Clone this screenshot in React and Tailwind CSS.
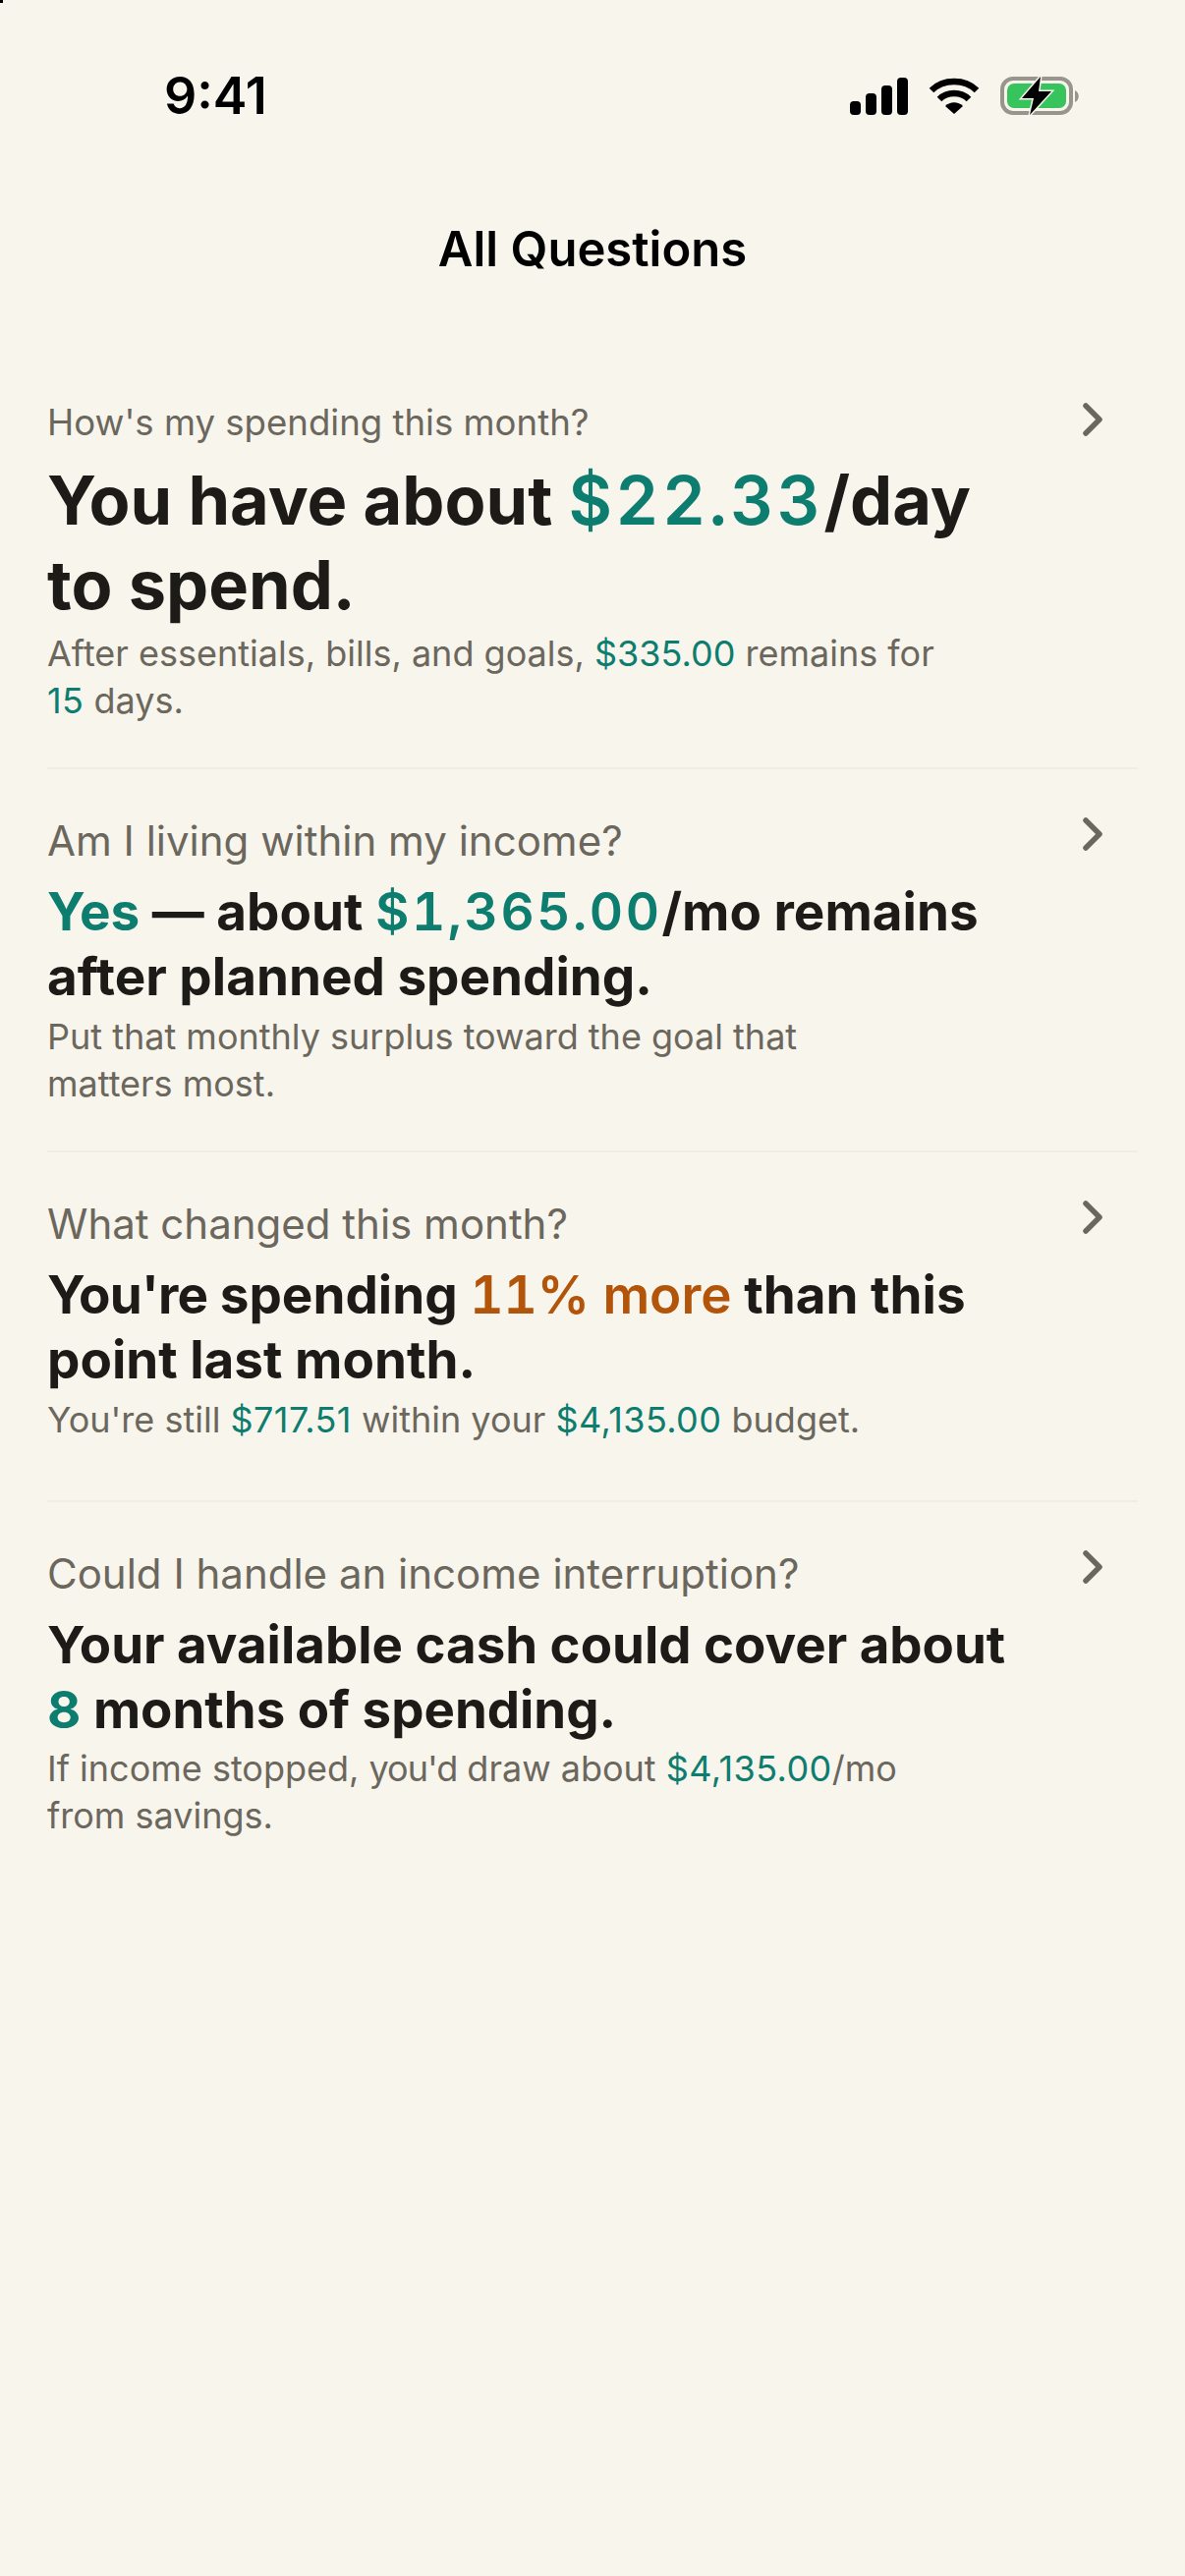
import React from 'react';

const G = ({ children, className = 'tracking-[0.012em]' }) => <span className={`text-[#0c7d6e] ${className}`}>{children}</span>;
// figures in the headlines are set wider than the words around them
const N = ({ children, className = 'tracking-[0.048em] text-[#0c7d6e]' }) => (
  <span className={`font-semibold tabular-nums ${className}`}>{children}</span>
);

const Chevron = ({ className }) => (
  <svg className={`absolute right-[34px] ${className}`} width="24" height="36" viewBox="0 0 24 36" fill="none">
    <path d="M5 4 L19 18 L5 32" stroke="#6b675d" strokeWidth="5.5" strokeLinecap="round" strokeLinejoin="round" />
  </svg>
);

const Row = ({ q, h, sub, qClass, hClass, rowClass, subClass = 'mt-[4px]', chevronClass = 'top-[48px]', border = true }) => (
  <div className={`relative ml-[48px] w-[1110px] ${rowClass} ${border ? 'border-b-2 border-[#f0ede6]' : ''}`}>
    <Chevron className={chevronClass} />
    <div className={`text-[#6b675d] ${qClass}`}>{q}</div>
    <div className={`font-bold text-[#1c1b18] ${hClass}`}>{h}</div>
    <div className={`text-[36px] leading-[48px] text-[#6b675d] ${subClass}`}>{sub}</div>
  </div>
);

export default function App() {
  return (
    <div className="relative min-h-[2622px] bg-[#f8f5ed] font-['Inter',sans-serif]">
      <div className="absolute left-0 top-0 h-[3px] w-[3px] bg-black" />

      {/* status bar */}
      <div className="flex h-[224px] items-start justify-between pl-[167px] pr-[106px] pt-[66px]">
        <div className="text-[52px] font-semibold leading-[64px] text-black">9:41</div>
        <div className="mt-[10px] flex items-center gap-[21px]">
          <svg width="59" height="38" viewBox="0 0 59 38" fill="black">
            <rect x="0" y="24" width="11" height="14" rx="4" />
            <rect x="16" y="16" width="11" height="22" rx="4" />
            <rect x="32" y="8" width="11" height="30" rx="4" />
            <rect x="48" y="0" width="11" height="38" rx="4" />
          </svg>
          <svg width="52" height="38" viewBox="0 0 52 38" fill="none">
            <path d="M3 13 C15 1 37 1 49 13" stroke="black" strokeWidth="6.5" />
            <path d="M11 22 C19 14 33 14 41 22" stroke="black" strokeWidth="6.5" />
            <path d="M17 29 L26 37 L35 29 C30 24 22 24 17 29 Z" fill="black" />
          </svg>
          <svg width="82" height="44" viewBox="0 0 82 44" fill="none">
            <rect x="2" y="4" width="70" height="35" rx="11" stroke="#98958c" strokeWidth="4" />
            <rect x="7" y="9" width="60" height="25" rx="7" fill="#37c45c" />
            <path d="M76 16 C81 18 81 26 76 28 Z" fill="#98958c" />
            <path d="M41 2 L22 24 L34 24 L30 41 L52 17 L39 17 Z" fill="black" stroke="#f8f5ed" strokeWidth="3" paintOrder="stroke" />
          </svg>
        </div>
      </div>

      {/* title */}
      <div className="h-[172px] text-center text-[49px] font-semibold leading-[60px] text-black">All Questions</div>

      <Row
        rowClass="h-[387px] pt-[10px]"
        chevronClass="top-[13px]"
        qClass="text-[36.6px] leading-[48px]"
        hClass="mt-[13px] text-[68.5px] leading-[86px]"
        subClass="mt-[2px]"
        q="How's my spending this month?"
        h={<>You have about <N>$22.33</N>/day<br />to spend.</>}
        sub={<>After essentials, bills, and goals, <G className="tracking-normal">$335.00</G> remains for<br /><G>15</G> days.</>}
      />
      <Row
        rowClass="h-[390px] pt-[48px]"
        qClass="text-[42px] leading-[50px]"
        hClass="mt-[14px] text-[53px] leading-[66px]"
        q="Am I living within my income?"
        h={<><span className="text-[#0c7d6e]">Yes</span> — about <N>$1,365.00</N>/mo remains<br />after planned spending.</>}
        sub={<>Put that monthly surplus toward the goal that<br />matters most.</>}
      />
      <Row
        rowClass="h-[356px] pt-[48px]"
        qClass="text-[42px] leading-[50px]"
        hClass="mt-[14px] text-[53px] leading-[66px]"
        q="What changed this month?"
        h={<><span className="tracking-[-0.016em]">You're</span> spending <span className="font-semibold text-[#b25409]"><N className="tracking-normal text-[#b25409]">11%</N> more</span> than this<br />point last month.</>}
        sub={<>You're still <G>$717.51</G> within your <G>$4,135.00</G> budget.</>}
      />
      <Row
        border={false}
        rowClass="pt-[48px]"
        qClass="text-[42px] leading-[50px]"
        hClass="mt-[14px] text-[52.8px] leading-[66px]"
        subClass="mt-[3px]"
        q="Could I handle an income interruption?"
        h={<>Your available cash could cover about<br /><span className="text-[#0c7d6e]">8</span> months of spending.</>}
        sub={<>If income stopped, <span className="tracking-[-0.028em]">you'd</span> draw about <G>$4,135.00</G>/mo<br />from savings.</>}
      />
    </div>
  );
}
